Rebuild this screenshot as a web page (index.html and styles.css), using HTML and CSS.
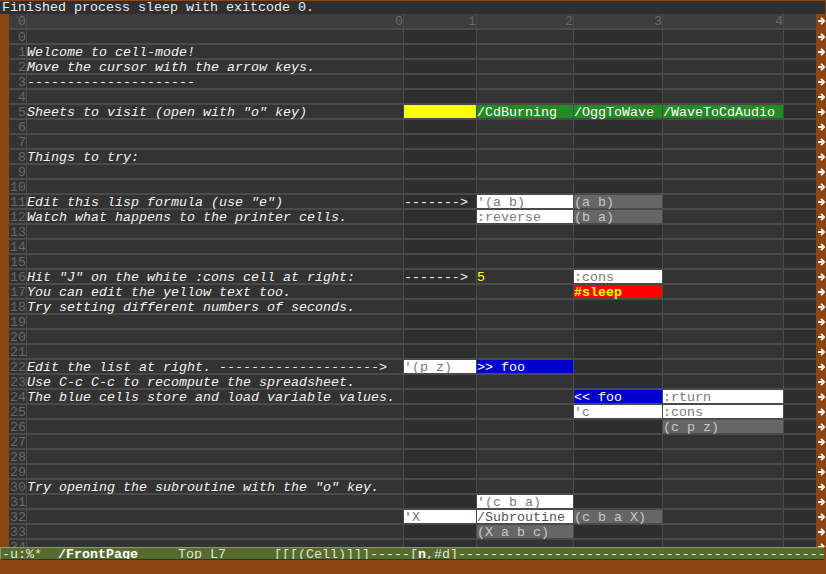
FILE: index.html
```html
<!DOCTYPE html>
<html>
<head>
<meta charset="utf-8">
<link rel="stylesheet" href="styles.css">
</head>
<body>
<svg class="defs" width="0" height="0"><symbol id="ar" viewBox="0 0 7 8"><path d="M0 3h4.5v2H0z" fill="#fff"/><path d="M3 0.8L6.2 4L3 7.2" fill="none" stroke="#fff" stroke-width="1.7"/></symbol></svg>
<div class="msg">Finished process sleep with exitcode 0.</div>
<div class="main">
  <div class="grid">
    <div class="row head"><div class="n">0</div><div class="c">0</div><div class="c">1</div><div class="c">2</div><div class="c">3</div><div class="c">4</div><div class="c"></div></div>
    <div class="row"><div class="n">0</div><div class="c"></div><div class="c"></div><div class="c"></div><div class="c"></div><div class="c"></div><div class="c"></div></div>
    <div class="row"><div class="n">1</div><div class="c t">Welcome to cell-mode!</div><div class="c"></div><div class="c"></div><div class="c"></div><div class="c"></div><div class="c"></div></div>
    <div class="row"><div class="n">2</div><div class="c t">Move the cursor with the arrow keys.</div><div class="c"></div><div class="c"></div><div class="c"></div><div class="c"></div><div class="c"></div></div>
    <div class="row"><div class="n">3</div><div class="c t">---------------------</div><div class="c"></div><div class="c"></div><div class="c"></div><div class="c"></div><div class="c"></div></div>
    <div class="row"><div class="n">4</div><div class="c"></div><div class="c"></div><div class="c"></div><div class="c"></div><div class="c"></div><div class="c"></div></div>
    <div class="row"><div class="n">5</div><div class="c t">Sheets to visit (open with "o" key)</div><div class="c yellow"></div><div class="c green">/CdBurning</div><div class="c green">/OggToWave</div><div class="c green">/WaveToCdAudio</div><div class="c"></div></div>
    <div class="row"><div class="n">6</div><div class="c"></div><div class="c"></div><div class="c"></div><div class="c"></div><div class="c"></div><div class="c"></div></div>
    <div class="row"><div class="n">7</div><div class="c"></div><div class="c"></div><div class="c"></div><div class="c"></div><div class="c"></div><div class="c"></div></div>
    <div class="row"><div class="n">8</div><div class="c t">Things to try:</div><div class="c"></div><div class="c"></div><div class="c"></div><div class="c"></div><div class="c"></div></div>
    <div class="row"><div class="n">9</div><div class="c"></div><div class="c"></div><div class="c"></div><div class="c"></div><div class="c"></div><div class="c"></div></div>
    <div class="row"><div class="n">10</div><div class="c"></div><div class="c"></div><div class="c"></div><div class="c"></div><div class="c"></div><div class="c"></div></div>
    <div class="row"><div class="n">11</div><div class="c t">Edit this lisp formula (use "e")</div><div class="c">-------&gt;</div><div class="c white">'(a b)</div><div class="c gray">(a b)</div><div class="c"></div><div class="c"></div></div>
    <div class="row"><div class="n">12</div><div class="c t">Watch what happens to the printer cells.</div><div class="c"></div><div class="c white">:reverse</div><div class="c gray">(b a)</div><div class="c"></div><div class="c"></div></div>
    <div class="row"><div class="n">13</div><div class="c"></div><div class="c"></div><div class="c"></div><div class="c"></div><div class="c"></div><div class="c"></div></div>
    <div class="row"><div class="n">14</div><div class="c"></div><div class="c"></div><div class="c"></div><div class="c"></div><div class="c"></div><div class="c"></div></div>
    <div class="row"><div class="n">15</div><div class="c"></div><div class="c"></div><div class="c"></div><div class="c"></div><div class="c"></div><div class="c"></div></div>
    <div class="row"><div class="n">16</div><div class="c t">Hit "J" on the white :cons cell at right:</div><div class="c">-------&gt;</div><div class="c ytext">5</div><div class="c white">:cons</div><div class="c"></div><div class="c"></div></div>
    <div class="row"><div class="n">17</div><div class="c t">You can edit the yellow text too.</div><div class="c"></div><div class="c"></div><div class="c red">#sleep</div><div class="c"></div><div class="c"></div></div>
    <div class="row"><div class="n">18</div><div class="c t">Try setting different numbers of seconds.</div><div class="c"></div><div class="c"></div><div class="c"></div><div class="c"></div><div class="c"></div></div>
    <div class="row"><div class="n">19</div><div class="c"></div><div class="c"></div><div class="c"></div><div class="c"></div><div class="c"></div><div class="c"></div></div>
    <div class="row"><div class="n">20</div><div class="c"></div><div class="c"></div><div class="c"></div><div class="c"></div><div class="c"></div><div class="c"></div></div>
    <div class="row"><div class="n">21</div><div class="c"></div><div class="c"></div><div class="c"></div><div class="c"></div><div class="c"></div><div class="c"></div></div>
    <div class="row"><div class="n">22</div><div class="c t">Edit the list at right. --------------------&gt;</div><div class="c white">'(p z)</div><div class="c blue">&gt;&gt; foo</div><div class="c"></div><div class="c"></div><div class="c"></div></div>
    <div class="row"><div class="n">23</div><div class="c t">Use C-c C-c to recompute the spreadsheet.</div><div class="c"></div><div class="c"></div><div class="c"></div><div class="c"></div><div class="c"></div></div>
    <div class="row"><div class="n">24</div><div class="c t">The blue cells store and load variable values.</div><div class="c"></div><div class="c"></div><div class="c blue">&lt;&lt; foo</div><div class="c white">:rturn</div><div class="c"></div></div>
    <div class="row"><div class="n">25</div><div class="c"></div><div class="c"></div><div class="c"></div><div class="c white">'c</div><div class="c white">:cons</div><div class="c"></div></div>
    <div class="row"><div class="n">26</div><div class="c"></div><div class="c"></div><div class="c"></div><div class="c"></div><div class="c gray">(c p z)</div><div class="c"></div></div>
    <div class="row"><div class="n">27</div><div class="c"></div><div class="c"></div><div class="c"></div><div class="c"></div><div class="c"></div><div class="c"></div></div>
    <div class="row"><div class="n">28</div><div class="c"></div><div class="c"></div><div class="c"></div><div class="c"></div><div class="c"></div><div class="c"></div></div>
    <div class="row"><div class="n">29</div><div class="c"></div><div class="c"></div><div class="c"></div><div class="c"></div><div class="c"></div><div class="c"></div></div>
    <div class="row"><div class="n">30</div><div class="c t">Try opening the subroutine with the "o" key.</div><div class="c"></div><div class="c"></div><div class="c"></div><div class="c"></div><div class="c"></div></div>
    <div class="row"><div class="n">31</div><div class="c"></div><div class="c"></div><div class="c white">'(c b a)</div><div class="c"></div><div class="c"></div><div class="c"></div></div>
    <div class="row"><div class="n">32</div><div class="c"></div><div class="c white">'X</div><div class="c white dark">/Subroutine</div><div class="c gray">(c b a X)</div><div class="c"></div><div class="c"></div></div>
    <div class="row"><div class="n">33</div><div class="c"></div><div class="c"></div><div class="c gray">(X a b c)</div><div class="c"></div><div class="c"></div><div class="c"></div></div>
    <div class="row"><div class="n">34</div><div class="c"></div><div class="c"></div><div class="c"></div><div class="c"></div><div class="c"></div><div class="c"></div></div>
  </div>
  <div class="arrows">
    <span class="first"><svg class="ar"><use href="#ar"/></svg></span>
    <span><svg class="ar"><use href="#ar"/></svg></span>
    <span><svg class="ar"><use href="#ar"/></svg></span>
    <span><svg class="ar"><use href="#ar"/></svg></span>
    <span><svg class="ar"><use href="#ar"/></svg></span>
    <span><svg class="ar"><use href="#ar"/></svg></span>
    <span><svg class="ar"><use href="#ar"/></svg></span>
    <span><svg class="ar"><use href="#ar"/></svg></span>
    <span><svg class="ar"><use href="#ar"/></svg></span>
    <span><svg class="ar"><use href="#ar"/></svg></span>
    <span><svg class="ar"><use href="#ar"/></svg></span>
    <span><svg class="ar"><use href="#ar"/></svg></span>
    <span><svg class="ar"><use href="#ar"/></svg></span>
    <span><svg class="ar"><use href="#ar"/></svg></span>
    <span><svg class="ar"><use href="#ar"/></svg></span>
    <span><svg class="ar"><use href="#ar"/></svg></span>
    <span><svg class="ar"><use href="#ar"/></svg></span>
    <span><svg class="ar"><use href="#ar"/></svg></span>
    <span><svg class="ar"><use href="#ar"/></svg></span>
    <span><svg class="ar"><use href="#ar"/></svg></span>
    <span><svg class="ar"><use href="#ar"/></svg></span>
    <span><svg class="ar"><use href="#ar"/></svg></span>
    <span><svg class="ar"><use href="#ar"/></svg></span>
    <span><svg class="ar"><use href="#ar"/></svg></span>
    <span><svg class="ar"><use href="#ar"/></svg></span>
    <span><svg class="ar"><use href="#ar"/></svg></span>
    <span><svg class="ar"><use href="#ar"/></svg></span>
    <span><svg class="ar"><use href="#ar"/></svg></span>
    <span><svg class="ar"><use href="#ar"/></svg></span>
    <span><svg class="ar"><use href="#ar"/></svg></span>
    <span><svg class="ar"><use href="#ar"/></svg></span>
    <span><svg class="ar"><use href="#ar"/></svg></span>
    <span><svg class="ar"><use href="#ar"/></svg></span>
    <span><svg class="ar"><use href="#ar"/></svg></span>
    <span><svg class="ar"><use href="#ar"/></svg></span>
    <span><svg class="ar"><use href="#ar"/></svg></span>
  </div>
</div>
<div class="mode">-u:%*  <b>/FrontPage</b>     Top L7      [[[(Cell)]]]-----[<b>n</b>,#d]------------------------------------------------------------------</div>
</body>
</html>
```
FILE: styles.css
```css
html, body {
  margin: 0;
  padding: 0;
}
body {
  width: 826px;
  height: 574px;
  overflow: hidden;
  background: #8b4513;
  font-family: "Liberation Mono", "DejaVu Sans Mono", monospace;
  font-size: 13.33px;
}
.defs {
  position: absolute;
  width: 0;
  height: 0;
}
.msg {
  box-sizing: border-box;
  height: 14px;
  padding-top: 1px;
  line-height: 12px;
  border-top: 1px solid #8b4513;
  margin-right: 1px;
  padding-left: 2px;
  background: #2f2f2f;
  color: #ececec;
  white-space: pre;
}
.main {
  display: flex;
  height: 533px;
  padding-left: 9px;
}
.grid {
  width: 807px;
  display: flex;
  flex-direction: column;
  gap: 2px;
  background: #4a4a4a;
  overflow: hidden;
}
.row {
  flex: none;
  height: 13px;
  display: grid;
  grid-template-columns: 17px 376px 72px 96px 88px 120px 32px;
  column-gap: 1px;
  line-height: 11px;
}
.row.head {
  height: 14px;
  line-height: 12px;
}
.row > div {
  box-sizing: border-box;
  padding-top: 2px;
  white-space: pre;
}
.n {
  background: #333333;
  color: #686868;
  text-align: right;
}
.c {
  background: #333333;
  color: #f2f2f2;
}
.row > .c:nth-child(odd) {
  background: #2e2e2e;
}
.head > div,
.head > .c:nth-child(odd) {
  background: #3d3d3d;
  color: #686868;
  text-align: right;
}
.t {
  font-style: italic;
}
.row > .c.yellow { background: #ffff00; }
.row > .c.green { background: #228b22; color: #ffffff; }
.row > .c.white { background: #ffffff; color: #7a7a7a; }
.row > .c.white.dark { color: #555555; }
.row > .c.gray { background: #666666; color: #c8c8c8; }
.row > .c.blue { background: #0000cd; color: #ffffff; }
.row > .c.red { background: #ff0000; color: #ffff00; font-weight: bold; }
.row > .c.ytext { color: #ffff00; }
.arrows {
  width: 10px;
  display: flex;
  flex-direction: column;
  gap: 2px;
  overflow: hidden;
}
.arrows span {
  flex: none;
  height: 13px;
  display: flex;
  align-items: center;
  padding-left: 2px;
}
.arrows span.first {
  height: 14px;
}
.ar {
  width: 7px;
  height: 8px;
}
.mode {
  height: 10px;
  padding-top: 1px;
  line-height: 11px;
  border-top: 1px solid #8a9a6a;
  border-left: 1px solid #8a9a6a;
  border-bottom: 1px solid #2c3a18;
  margin-right: 2px;
  padding-left: 1px;
  background: #556b2f;
  color: #e4e4d4;
  white-space: pre;
  overflow: hidden;
}
.mode b {
  color: #ffffff;
}
```
